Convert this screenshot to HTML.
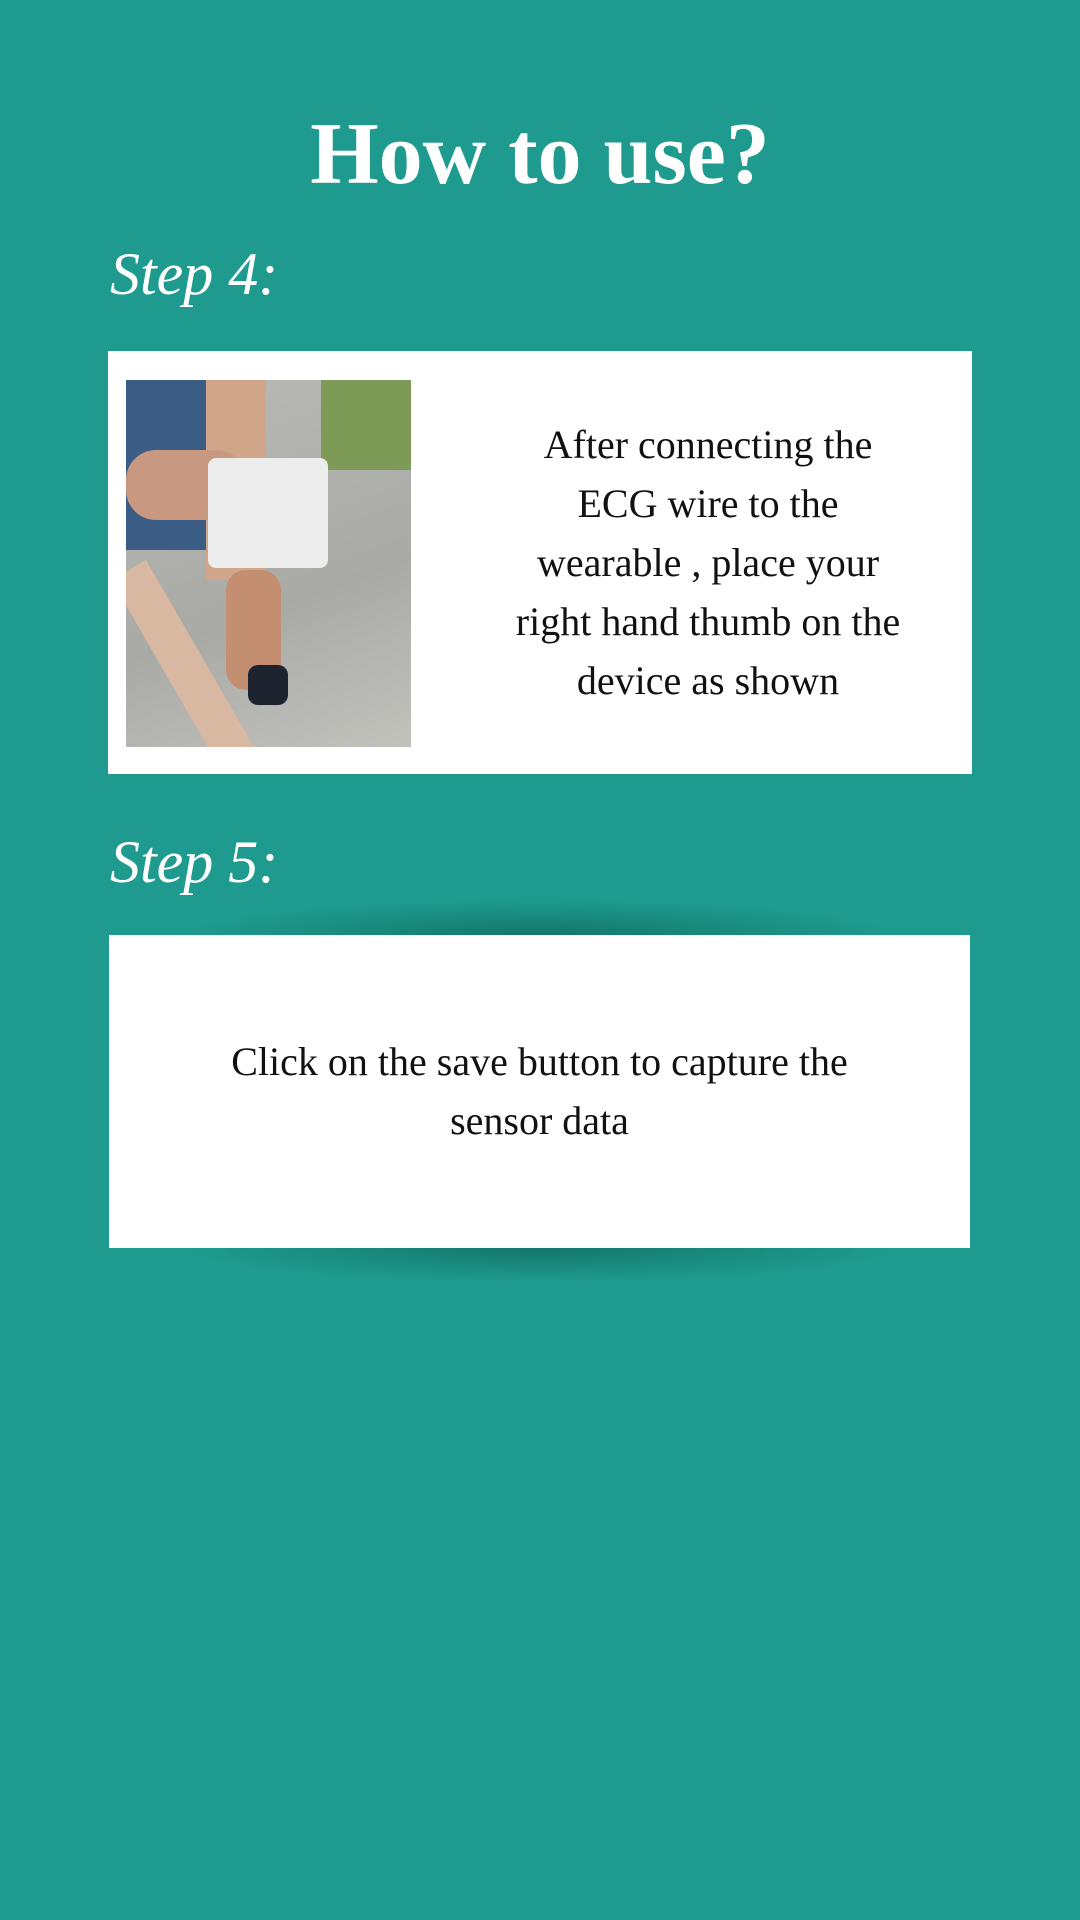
<!DOCTYPE html>
<html><head><meta charset="utf-8"><style>
html,body{margin:0;padding:0}
body{width:1080px;height:1920px;background:#1e9b8e;position:relative;overflow:hidden;font-family:"Liberation Serif",serif}
.title{position:absolute;top:104px;left:0;width:1080px;text-align:center;color:#fff;font-size:88px;font-weight:bold}
.step{position:absolute;left:110px;color:#fff;font-style:italic;font-size:60px;font-family:"Liberation Serif",serif}
.card{position:absolute;background:#fff}
.txt{position:absolute;text-align:center;color:#111;font-size:40px;line-height:59px}
.sh{position:absolute;left:180px;width:720px;height:70px;background:radial-gradient(ellipse at center,rgba(0,40,35,.32),rgba(0,40,35,0) 70%)}
</style></head><body>
<div class="title">How to use?</div>
<div class="step" style="top:240px">Step 4:</div>
<div class="card" style="left:108px;top:351px;width:864px;height:423px"></div>
<div style="position:absolute;left:126px;top:380px;width:285px;height:367px;background:linear-gradient(160deg,#b9bab6,#a9aaa6 60%,#c2c2bd);overflow:hidden">
  <div style="position:absolute;left:0;top:0;width:90px;height:170px;background:#3a5c85"></div>
  <div style="position:absolute;right:0;top:0;width:90px;height:90px;background:#7d9a56"></div>
  <div style="position:absolute;background:#d8b8a0;transform:rotate(60deg);transform-origin:0 0;left:20px;top:180px;width:240px;height:40px"></div>
  <div style="position:absolute;left:80px;top:0;width:60px;height:200px;background:#d0a58a"></div>
  <div style="position:absolute;left:0;top:70px;width:120px;height:70px;background:#c99880;border-radius:30px"></div>
  <div style="position:absolute;left:82px;top:78px;width:120px;height:110px;background:#ececec;border-radius:8px"></div>
  <div style="position:absolute;left:100px;top:190px;width:55px;height:120px;background:#c48e70;border-radius:20px"></div>
  <div style="position:absolute;left:122px;top:285px;width:40px;height:40px;background:#1d2430;border-radius:10px"></div>
</div>
<div class="txt" style="left:470px;top:415px;width:476px">After connecting the<br>ECG wire to the<br>wearable , place your<br>right hand thumb on the<br>device as shown</div>
<div class="step" style="top:828px">Step 5:</div>
<div class="sh" style="top:900px"></div>
<div class="sh" style="top:1213px"></div>
<div class="card" style="left:109px;top:935px;width:861px;height:313px"></div>
<div class="txt" style="left:109px;top:1032px;width:861px">Click on the save button to capture the<br>sensor data</div>
</body></html>
